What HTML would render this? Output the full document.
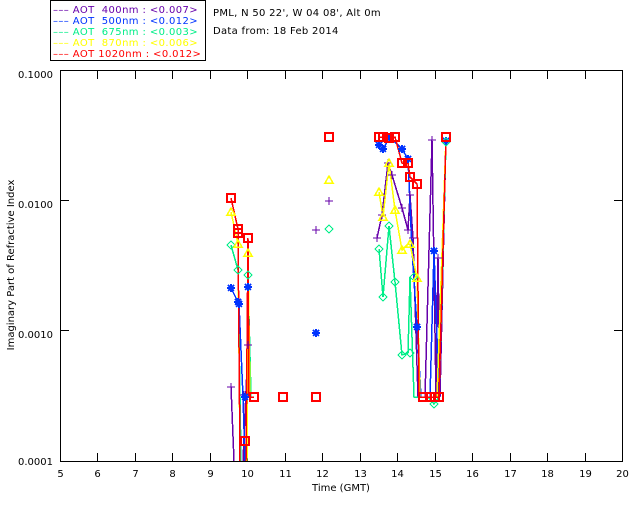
<!DOCTYPE html>
<html><head><style>
html,body{margin:0;padding:0;background:#fff;width:640px;height:512px;overflow:hidden}
svg text{font-family:"DejaVu Sans","Liberation Sans",sans-serif;font-size:10px}
</style></head><body>
<svg id="s" width="640" height="512" xmlns="http://www.w3.org/2000/svg" shape-rendering="crispEdges">
<rect x="0" y="0" width="640" height="512" fill="#fff"/>
<rect x="50.5" y="0.5" width="155" height="60" fill="none" stroke="#000"/>
<g style="font-size:10.5px;letter-spacing:0.4px">
<text x="53" y="13" fill="#6600aa">––– AOT&#160;&#160;400nm : &lt;0.007&gt;</text>
<text x="53" y="24" fill="#0033ff">––– AOT&#160;&#160;500nm : &lt;0.012&gt;</text>
<text x="53" y="35" fill="#00ee88">––– AOT&#160;&#160;675nm : &lt;0.003&gt;</text>
<text x="53" y="46" fill="#ffff00">––– AOT&#160;&#160;870nm : &lt;0.006&gt;</text>
<text x="53" y="57" fill="#ff0000">––– AOT 1020nm : &lt;0.012&gt;</text>
</g>
<text x="213" y="16" fill="#000" style="letter-spacing:0.3px">PML, N 50 22', W 04 08', Alt 0m</text>
<text x="213" y="34" fill="#000" style="letter-spacing:0.3px">Data from: 18 Feb 2014</text>
<rect x="60.5" y="70.5" width="562" height="391" fill="none" stroke="#000"/>
<g id="ax" stroke="#000"></g>
<g id="ln" fill="none" stroke-width="1.5"></g>
<g id="mk" fill="none" stroke-width="1.2"></g>
<text x="53" y="78" text-anchor="end">0.1000</text>
<text x="53" y="208" text-anchor="end">0.0100</text>
<text x="53" y="338" text-anchor="end">0.0010</text>
<text x="53" y="465" text-anchor="end">0.0001</text>
<text x="341" y="491" text-anchor="middle">Time (GMT)</text>
<text transform="translate(14,265) rotate(-90)" text-anchor="middle">Imaginary Part of Refractive Index</text>
<g id="xl"></g>
</svg>
<script>
var NS="http://www.w3.org/2000/svg";
function el(p,t,a,txt){var e=document.createElementNS(NS,t);for(var k in a)e.setAttribute(k,a[k]);if(txt)e.textContent=txt;document.getElementById(p).appendChild(e);}
for(var h=5;h<=20;h++){var x=Math.round(60+(h-5)*37.47)+0.5;
 if(h>5&&h<20){el('ax','line',{x1:x,y1:461,x2:x,y2:453});el('ax','line',{x1:x,y1:71,x2:x,y2:79});}
 el('xl','text',{x:x,y:477,'text-anchor':'middle'},String(h));}
[200,330].forEach(function(y){el('ax','line',{x1:61,y1:y+.5,x2:69,y2:y+.5});el('ax','line',{x1:622,y1:y+.5,x2:614,y2:y+.5});});
var L={
'#6600aa':["231,387 234,461","243,461 248,345 250,397 254,397","377,238 382,215 388,163 392,175 402,208 408,230 410,195 413,238 418,397 425,397 432,140 436,397 438,258 440,397 446,137"],
'#0033ff':["231,288 238,302 239,304 243,397 245,461","248,287 250,397 254,397","379,145 383,149 390,137 402,149 408,159 412,250 417,327 421,397 430,397 434,251 439,397 446,141"],
'#00ee88':["231,245 238,270 241,461","247,461 248,275 251,397 254,397","379,249 383,297 389,226 395,282 402,355 408,353 410,277 414,397 428,397 434,404 439,397 446,142"],
'#ffff00':["231,212 238,244 240,461","247,461 248,253 250,397 254,397","379,192 383,217 389,163 395,210 402,250 408,244 410,244 417,278 420,397 437,397 446,137"],
'#ff0000':["231,198 238,229 238,233 240,461","246,461 248,238 249,397 254,397","379,137 383,137 389,138 395,137 402,163 408,163 410,177 417,184 419,397 439,397 446,137"]};
for(var c in L)L[c].forEach(function(p){el('ln','polyline',{points:p,stroke:c});});
function plus(x,y,c){el('mk','path',{d:'M'+(x-4)+' '+y+'h8M'+x+' '+(y-4)+'v8',stroke:c});}
function star(x,y,c){el('mk','path',{d:'M'+(x-4)+' '+y+'h8M'+x+' '+(y-4)+'v8M'+(x-3)+' '+(y-3)+'l6 6M'+(x+3)+' '+(y-3)+'l-6 6',stroke:c,'stroke-width':1.6});}
function dia(x,y,c){el('mk','path',{d:'M'+x+' '+(y-4)+'l4 4l-4 4l-4 -4z',stroke:c});}
function tri(x,y,c){el('mk','path',{d:'M'+x+' '+(y-4)+'l4 7h-8z',stroke:c,'stroke-width':1.5});}
function sq(x,y,c){el('mk','rect',{x:x-4,y:y-4,width:8,height:8,stroke:c,'stroke-width':2});}
var P='#6600aa',B='#0033ff',G='#00ee88',Y='#ffff00',R='#ff0000';
[[231,387],[248,345],[244,395],[329,201],[316,230],[377,238],[382,215],[388,163],[392,175],[402,208],[408,230],[410,195],[413,238],[432,140],[438,258]].forEach(function(p){plus(p[0],p[1],P);});
[[231,288],[238,302],[239,304],[248,287],[245,397],[316,333],[379,145],[383,149],[390,137],[402,149],[408,159],[417,327],[434,251],[446,141]].forEach(function(p){star(p[0],p[1],B);});
[[231,245],[238,270],[248,275],[329,229],[379,249],[383,297],[389,226],[395,282],[402,355],[410,353],[414,277],[434,404],[446,142]].forEach(function(p){dia(p[0],p[1],G);});
[[231,212],[238,244],[248,253],[329,180],[379,192],[383,217],[389,163],[395,210],[402,250],[410,244],[417,278]].forEach(function(p){tri(p[0],p[1],Y);});
[[231,198],[238,229],[238,233],[248,238],[245,441],[254,397],[283,397],[316,397],[329,137],[379,137],[383,137],[389,138],[395,137],[402,163],[408,163],[410,177],[417,184],[423,397],[430,397],[435,397],[439,397],[446,137]].forEach(function(p){sq(p[0],p[1],R);});
</script>
</body></html>
